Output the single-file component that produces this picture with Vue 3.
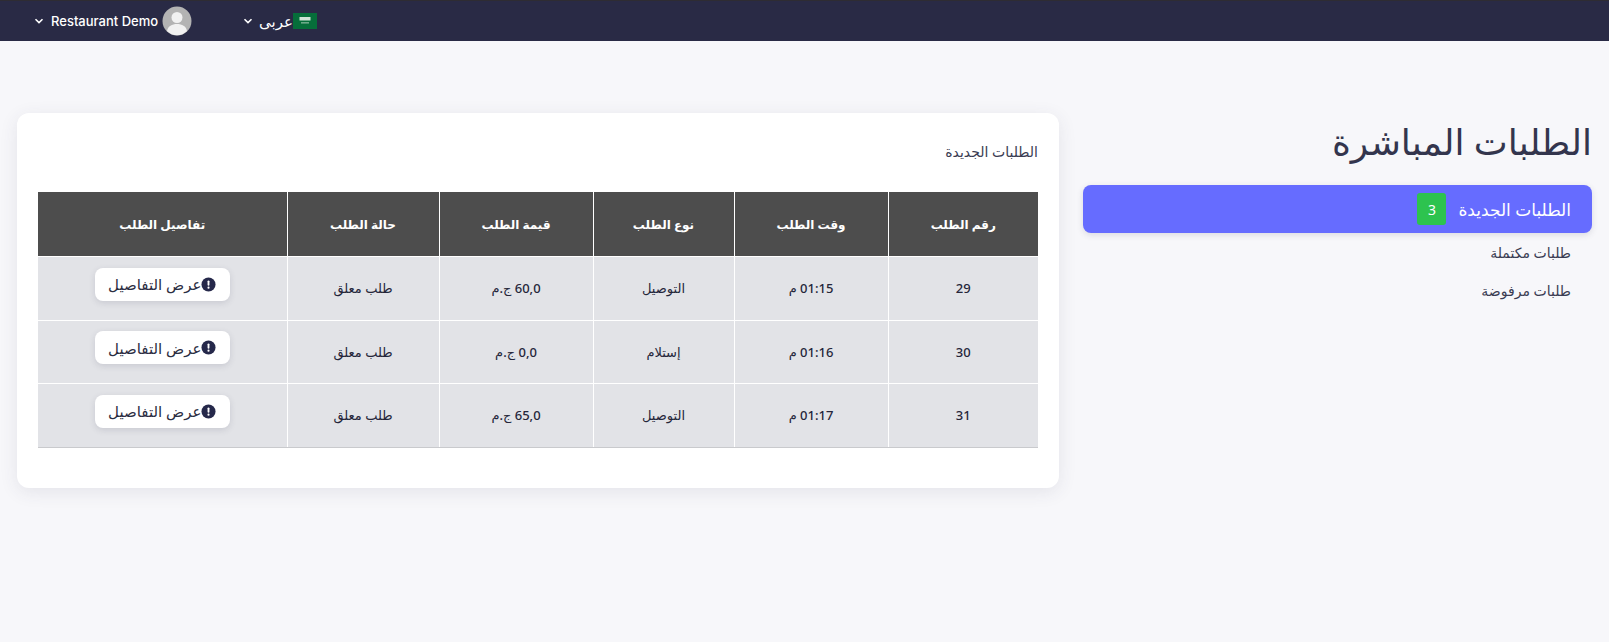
<template>
  <div class="page">
    <header class="navbar">
      <div class="user-menu">
        <svg class="chevron" viewBox="0 0 10 6"><path d="M1.5 1.2 5 4.6l3.5-3.4" /></svg>
        <span class="user-name">Restaurant Demo</span>
        <svg class="avatar" viewBox="0 0 30 30">
          <circle cx="15" cy="15" r="14.5" fill="#b3b3b3" />
          <circle cx="15" cy="11.5" r="5.5" fill="#f1f1f1" />
          <path d="M5 25c1-5 5-7 10-7s9 2 10 7a14 14 0 0 1-20 0z" fill="#f1f1f1" />
        </svg>
      </div>
      <div class="lang-menu">
        <svg class="chevron" viewBox="0 0 10 6"><path d="M1.5 1.2 5 4.6l3.5-3.4" /></svg>
        <span class="lang-name">عربى</span>
        <svg class="flag" viewBox="0 0 24 16">
          <rect width="24" height="16" fill="#066e3a" />
          <rect x="6.5" y="4" width="11" height="3.5" fill="#cfe3d6" />
          <rect x="8" y="9.5" width="8" height="0.8" fill="#cfe3d6" />
        </svg>
      </div>
    </header>

    <main class="content">
      <aside class="sidebar">
        <h1 class="page-title">الطلبات المباشرة</h1>
        <nav class="side-nav">
          <a class="side-link active">
            <span>الطلبات الجديدة</span>
            <span class="badge">3</span>
          </a>
          <a class="side-link">طلبات مكتملة</a>
          <a class="side-link">طلبات مرفوضة</a>
        </nav>
      </aside>

      <section class="card">
        <h2 class="card-title">الطلبات الجديدة</h2>
        <table class="orders">
          <colgroup>
            <col v-for="w in colWidths" :key="w" :style="{ width: w + 'px' }" />
          </colgroup>
          <thead>
            <tr>
              <th v-for="h in headers" :key="h">{{ h }}</th>
            </tr>
          </thead>
          <tbody>
            <tr v-for="o in orders" :key="o.id">
              <td>{{ o.id }}</td>
              <td>{{ o.time }}</td>
              <td>{{ o.type }}</td>
              <td>{{ o.price }}</td>
              <td>طلب معلق</td>
              <td>
                <button class="details-btn">
                  <svg class="info" viewBox="0 0 16 16">
                    <circle cx="8" cy="8" r="7.5" fill="#25284a" />
                    <rect x="7" y="3.6" width="2" height="5.6" rx="1" fill="#fff" />
                    <circle cx="8" cy="11.4" r="1.15" fill="#fff" />
                  </svg>
                  <span>عرض التفاصيل</span>
                </button>
              </td>
            </tr>
          </tbody>
        </table>
      </section>
    </main>
  </div>
</template>

<script setup>
const colWidths = [150, 154, 141, 154, 152, 249]

const headers = ['رقم الطلب', 'وقت الطلب', 'نوع الطلب', 'قيمة الطلب', 'حالة الطلب', 'تفاصيل الطلب']

const orders = [
  { id: 29, time: '01:15 م', type: 'التوصيل', price: '60,0 ج.م' },
  { id: 30, time: '01:16 م', type: 'إستلام', price: '0,0 ج.م' },
  { id: 31, time: '01:17 م', type: 'التوصيل', price: '65,0 ج.م' }
]
</script>

<style>
html,
body {
  margin: 0;
  background: #f7f7fa;
}
</style>

<style scoped>
.page {
  min-height: 642px;
  background: #f7f7fa;
  font-family: "Noto Sans", "DejaVu Sans", "Liberation Sans", sans-serif;
  color: #2b2d42;
}

.navbar {
  height: 40px;
  border-top: 1px solid #2e2c33;
  background: #292a45;
  display: flex;
  align-items: center;
  padding-left: 34px;
  color: #fff;
  font-size: 13px;
}

.user-menu,
.lang-menu {
  display: flex;
  align-items: center;
}

.lang-menu {
  margin-left: 51px;
}

.chevron {
  width: 10px;
  height: 6px;
  fill: none;
  stroke: #fff;
  stroke-width: 1.6;
}

.user-name {
  margin-left: 7px;
  font-family: Inter, "Liberation Sans", sans-serif;
  font-weight: 500;
}

.avatar {
  width: 30px;
  height: 30px;
  margin-left: 4px;
}

.lang-name {
  margin-left: 6px;
  font-size: 15px;
}

.flag {
  width: 24px;
  height: 16px;
}

.content {
  direction: rtl;
  display: flex;
  align-items: flex-start;
  gap: 24px;
  padding: 72px 17px 0 18px;
}

.sidebar {
  width: 509px;
  flex-shrink: 0;
}

.page-title {
  margin: 0;
  font-size: 36px;
  font-weight: 400;
  line-height: 58px;
  color: #33354d;
}

.side-nav {
  display: flex;
  flex-direction: column;
  margin-top: 14px;
}

.side-link {
  display: flex;
  align-items: center;
  height: 38px;
  padding: 0 21px;
  font-size: 14px;
  color: #3a3c52;
}

.side-link.active {
  height: 48px;
  gap: 12px;
  border-radius: 8px;
  background: #666cff;
  color: #fff;
  font-size: 17px;
  box-shadow: 0 2px 6px rgba(60, 60, 90, 0.15);
}

.badge {
  width: 29px;
  height: 32px;
  border-radius: 3px;
  background: #2dc34f;
  color: #fff;
  font-size: 14px;
  display: flex;
  align-items: center;
  justify-content: center;
}

.card {
  flex: 1;
  height: 375px;
  box-sizing: border-box;
  padding: 24px 21px 0;
  background: #fff;
  border-radius: 12px;
  box-shadow: 0 4px 18px rgba(60, 60, 90, 0.1);
}

.card-title {
  margin: 0;
  font-size: 14px;
  font-weight: 400;
  line-height: 30px;
  color: #3a3c52;
}

.orders {
  width: 1000px;
  margin-top: 25px;
  border-collapse: collapse;
  table-layout: fixed;
  font-size: 13px;
}

.orders th {
  height: 64px;
  padding: 0;
  background: #4d4d4d;
  color: #fff;
  font-weight: 700;
  font-size: 12px;
  border-left: 1px solid #fff;
  border-bottom: 1px solid #fff;
}

.orders th:last-child,
.orders td:last-child {
  border-left: 0;
}

.orders td {
  height: 62.6px;
  padding: 0;
  text-align: center;
  background: #e2e3e7;
  color: #25263a;
  font-weight: 500;
  border-left: 1px solid #fff;
  border-bottom: 1px solid #fff;
}

.orders tr:last-child td {
  border-bottom-color: #c9cacd;
}

.details-btn {
  display: inline-flex;
  align-items: center;
  justify-content: center;
  width: 135px;
  height: 33px;
  margin-bottom: 8px;
  padding: 0;
  border: 0;
  border-radius: 8px;
  background: #fff;
  box-shadow: 0 2px 6px rgba(60, 60, 90, 0.15);
  font-family: inherit;
  font-size: 15px;
  color: #2b2d42;
}

.info {
  width: 15px;
  height: 15px;
}
</style>
